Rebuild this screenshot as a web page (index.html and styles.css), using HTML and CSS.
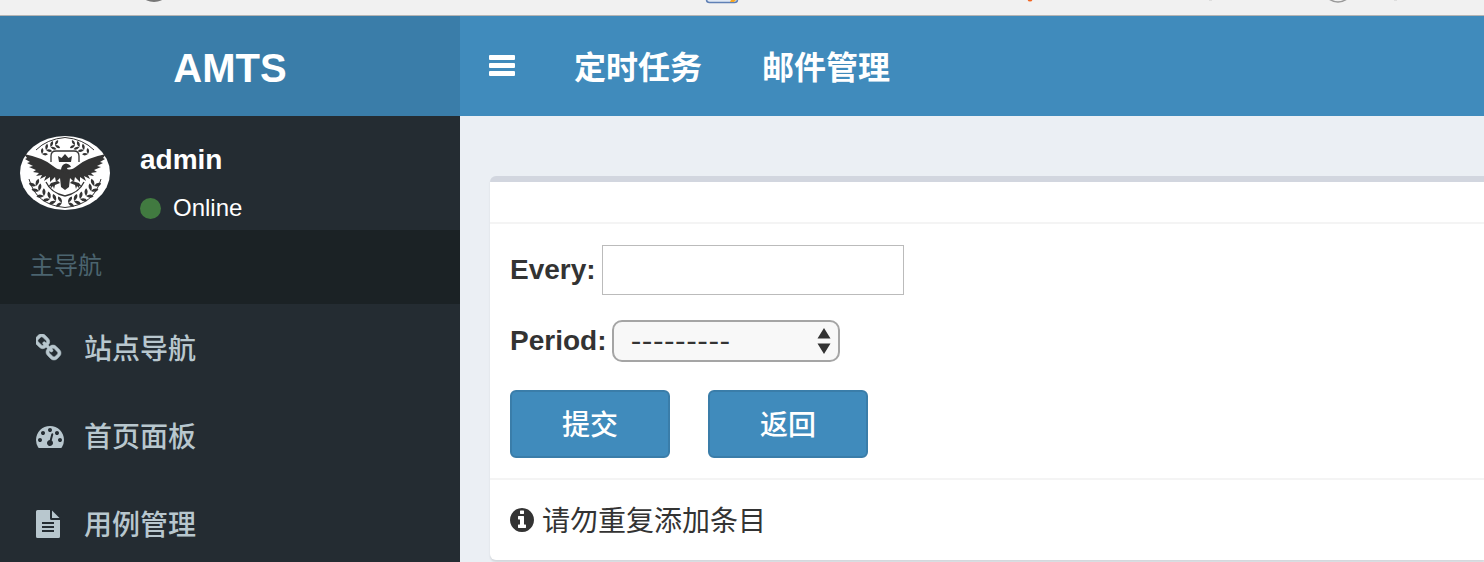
FILE: index.html
```html
<!DOCTYPE html>
<html lang="zh-CN">
<head>
<meta charset="utf-8">
<title>AMTS</title>
<link rel="stylesheet" href="styles.css">
</head>
<body>
<div class="toolbar" aria-hidden="true">
  <svg class="toolbar-icons" width="1484" height="15" viewBox="0 0 1484 15">
    <ellipse cx="154" cy="-3" rx="10" ry="5" fill="#777"/>
    <rect x="706.500" y="-12" width="31" height="14.500" rx="3" fill="#dfe8f5" stroke="#5f80b5" stroke-width="1.500"/>
    <path d="M731 0h5l-2 2h-4z" fill="#f5a623"/>
    <circle cx="1030" cy="-1" r="2.500" fill="#f26522"/>
    <path d="M1329 -1Q1338 5 1347 -1" fill="none" stroke="#999" stroke-width="1.500"/>
    <path d="M1209 0h3M1394 0h3" stroke="#ccc"/>
  </svg>
</div>
<header class="header">
  <a class="logo" href="#">AMTS</a>
  <nav class="navbar">
    <button class="toggle" type="button" aria-label="Toggle navigation">
      <svg width="26" height="22" viewBox="0 0 26 22" fill="currentColor"><rect y="0" width="26" height="5" rx="1"/><rect y="8" width="26" height="5" rx="1"/><rect y="16" width="26" height="5" rx="1"/></svg>
    </button>
    <a class="nav-link" href="#">定时任务</a>
    <a class="nav-link" href="#">邮件管理</a>
  </nav>
</header>
<div class="wrapper">
  <aside class="sidebar">
    <div class="user-panel">
      <svg class="avatar" viewBox="0 0 90 74" role="img" aria-label="admin">
        <defs>
          <g id="leaf-pair">
            <path d="M0 0Q-6-1-6-6Q-1-6 0 0ZM0 0Q1-6 6-6Q6-1 0 0Z"/>
          </g>
          <g id="half">
            <path d="M16 14Q27 3 45 1.500" fill="none" stroke="#333" stroke-width="1"/>
            <path d="M9 43Q16 69 45 71.500" fill="none" stroke="#333" stroke-width="1"/>
            <path d="M45 15H36Q31 15 31 20V26M26 46Q31 57 45 60" fill="none" stroke="#333" stroke-width="1.300"/>
            <g fill="#333">
              <use href="#leaf-pair" transform="translate(22 18) rotate(48) scale(.7)"/>
              <use href="#leaf-pair" transform="translate(26 14) rotate(56) scale(.75)"/>
              <use href="#leaf-pair" transform="translate(30.500 11) rotate(65) scale(.75)"/>
              <use href="#leaf-pair" transform="translate(35 9) rotate(76) scale(.7)"/>
              <use href="#leaf-pair" transform="translate(16 50) rotate(-25) scale(.9)"/>
              <use href="#leaf-pair" transform="translate(19 55) rotate(-34) scale(.9)"/>
              <use href="#leaf-pair" transform="translate(24 60) rotate(-46) scale(.9)"/>
              <use href="#leaf-pair" transform="translate(30 63) rotate(-58) scale(.9)"/>
              <use href="#leaf-pair" transform="translate(36 65) rotate(-68) scale(.9)"/>
              <use href="#leaf-pair" transform="translate(42 66.500) rotate(-78) scale(.85)"/>
              <path d="M45 32Q40 36 33 30Q24 22 4 18L7 22L5 23L10 26L7 27L13 30L9 31L16 34L13 36L19 37L16 40L22 39L20 43L26 40L24 45L30 41L30 46L35 41L36 46L40 42L41 51L45 54Z"/>
              <path d="M38 45l-7 2-3 4 3-1-1 3 3-3 1 3 1-4 5-2z"/>
            </g>
          </g>
        </defs>
        <ellipse cx="45" cy="37" rx="45" ry="37" fill="#fff"/>
        <use href="#half"/>
        <use href="#half" transform="translate(90 0) scale(-1 1)"/>
        <path d="M41 35Q41 28 46 27.500Q50 28 51 31L47 32L49 38Z" fill="#333"/>
        <path d="M38 20L41.500 22L45 18L48.500 22L52 20L51 26H39Z" fill="#333"/>
      </svg>
      <div class="user-info">
        <p class="user-name">admin</p>
        <a class="status" href="#"><span class="dot"></span>Online</a>
      </div>
    </div>
    <div class="menu-title">主导航</div>
    <nav class="menu">
      <a class="menu-item" href="#">
        <svg width="28" height="28" viewBox="96 32 1740 1740" fill="currentColor" stroke="currentColor" stroke-width="36"><path d="M1456 1216q0-40-28-68l-208-208q-28-28-68-28-42 0-72 32 3 3 19 18.500t21.500 21.500 15 19 13 25.500 3.500 27.500q0 40-28 68t-68 28q-15 0-27.500-3.500t-25.500-13-19-15-21.500-21.500-18.500-19q-33 31-33 73 0 40 28 68l206 207q27 27 68 27 40 0 68-26l147-146q28-28 28-67zm-703-705q0-40-28-68l-206-207q-28-28-68-28-39 0-68 27l-147 146q-28 28-28 67 0 40 28 68l208 208q27 27 68 27 42 0 72-31-3-3-19-18.500t-21.500-21.500-15-19-13-25.500-3.500-27.500q0-40 28-68t68-28q15 0 27.500 3.500t25.500 13 19 15 21.500 21.500 18.500 19q33-31 33-73zm895 705q0 120-85 203l-147 146q-83 83-203 83-121 0-204-85l-206-207q-83-83-83-203 0-123 88-209l-88-88q-86 88-208 88-120 0-204-84l-208-208q-84-84-84-204t85-203l147-146q83-83 203-83 121 0 204 85l206 207q83 83 83 203 0 123-88 209l88 88q86-88 208-88 120 0 204 84l208 208q84 84 84 204z"/></svg>
        <span>站点导航</span>
      </a>
      <a class="menu-item" href="#">
        <svg width="28" height="28" viewBox="0 0 1792 1792" fill="currentColor"><path d="M384 1152q0-53-37.500-90.500t-90.500-37.500-90.500 37.500-37.500 90.500 37.500 90.500 90.500 37.500 90.500-37.500 37.500-90.500zm192-448q0-53-37.500-90.500t-90.500-37.500-90.500 37.500-37.500 90.500 37.500 90.500 90.500 37.500 90.500-37.500 37.500-90.500zm428 481l101-382q6-26-7.500-48.500t-38.500-29.500-48 6.500-30 39.500l-101 382q-60 5-107 43.500t-63 98.500q-20 77 20 146t117 89 146-20 89-117q16-60-6-117t-72-91zm660-33q0-53-37.500-90.500t-90.500-37.500-90.500 37.500-37.500 90.500 37.500 90.500 90.500 37.500 90.500-37.500 37.500-90.500zm-640-640q0-53-37.500-90.500t-90.500-37.500-90.500 37.500-37.500 90.500 37.500 90.500 90.500 37.500 90.500-37.500 37.500-90.500zm448 192q0-53-37.500-90.500t-90.500-37.500-90.500 37.500-37.500 90.500 37.500 90.500 90.500 37.500 90.500-37.500 37.500-90.500zm320 448q0 261-141 483-19 29-54 29h-1402q-35 0-54-29-141-221-141-483 0-182 71-348t191-286 286-191 348-71 348 71 286 191 191 286 71 348z"/></svg>
        <span>首页面板</span>
      </a>
      <a class="menu-item" href="#">
        <svg width="28" height="28" viewBox="0 0 28 28" fill="currentColor"><path fill-rule="evenodd" d="M1.500 0H14V8.500Q14 10 15.500 10H24V26.500Q24 28 22.500 28H1.500Q0 28 0 26.500V1.500Q0 0 1.500 0ZM6 12V14H18V12ZM6 16V18H18V16ZM6 20V22H18V20Z"/><path d="M16 .500L23.500 8H16Z"/></svg>
        <span>用例管理</span>
      </a>
    </nav>
  </aside>
  <main class="content">
    <form class="box">
      <div class="box-header"></div>
      <div class="box-body">
        <div class="field field-every">
          <label for="every">Every:</label>
          <input id="every" class="text-input" type="text">
        </div>
        <div class="field">
          <label for="period">Period:</label>
          <span class="select-wrap">
            <select id="period" class="select"><option>---------</option></select>
            <svg class="select-arrows" width="14" height="26" viewBox="0 0 14 26" fill="#333"><path d="M7 0L13.500 10.500H.500ZM7 26L.500 15.500H13.500Z"/></svg>
          </span>
        </div>
        <div class="actions">
          <button class="btn" type="submit">提交</button>
          <button class="btn" type="button">返回</button>
        </div>
      </div>
      <div class="box-footer">
        <svg width="24" height="24" viewBox="128 128 1536 1536" fill="currentColor"><path d="M1152 1376v-160q0-14-9-23t-23-9h-96v-512q0-14-9-23t-23-9h-320q-14 0-23 9t-9 23v160q0 14 9 23t23 9h96v320h-96q-14 0-23 9t-9 23v160q0 14 9 23t23 9h448q14 0 23-9t9-23zm-128-896v-160q0-14-9-23t-23-9h-192q-14 0-23 9t-9 23v160q0 14 9 23t23 9h192q14 0 23-9t9-23zm640 416q0 209-103 385.500t-279.500 279.500-385.500 103-385.500-103-279.500-279.500-103-385.500 103-385.500 279.500-279.500 385.500-103 385.500 103 279.500 279.500 103 385.500z"/></svg>
        <span>请勿重复添加条目</span>
      </div>
    </form>
  </main>
</div>
</body>
</html>
```
FILE: styles.css
```css
* { box-sizing: border-box; }
body {
  margin: 0;
  height: 100vh;
  display: flex;
  flex-direction: column;
  overflow: hidden;
  font-family: "Liberation Sans", "Noto Sans CJK SC", sans-serif;
  font-size: 28px;
  line-height: 40px;
  color: #333;
  background: #ebeff4;
}
a { color: inherit; text-decoration: none; }
p { margin: 0; }
button, input, select { font: inherit; margin: 0; }
svg { display: block; flex: none; }

.toolbar {
  flex: none;
  height: 16px;
  overflow: hidden;
  background: #f1f1f1;
  border-bottom: 1px solid #b4b4b4;
}

.header { display: flex; flex: none; height: 100px; color: #fff; }
.logo {
  width: 460px;
  display: flex;
  align-items: center;
  justify-content: center;
  background: #3a7da9;
  font-size: 40px;
  font-weight: bold;
  padding-top: 4px;
}
.navbar {
  flex: 1;
  display: flex;
  align-items: center;
  background: #408bbc;
}
.toggle {
  border: 0;
  background: none;
  color: inherit;
  padding: 30px 29px;
}
.nav-link { padding: 4px 30px 0; font-size: 32px; font-weight: bold; }

.wrapper { flex: 1; min-height: 0; display: flex; }
.sidebar {
  flex: none;
  width: 460px;
  overflow: hidden;
  background: #242c32;
  color: #b8c7ce;
}
.user-panel {
  display: flex;
  gap: 30px;
  height: 114px;
  padding: 20px;
  color: #fff;
}
.avatar { width: 90px; height: 74px; }
.user-info { padding-top: 4px; }
.user-name { font-weight: bold; }
.status {
  display: flex;
  align-items: center;
  gap: 12px;
  margin-top: 8px;
  font-size: 24px;
}
.dot { width: 21px; height: 21px; border-radius: 50%; background: #417a40; }
.menu-title {
  height: 74px;
  padding: 16px 30px;
  background: #1b2225;
  color: #4b646f;
  font-size: 24px;
}
.menu-item {
  display: flex;
  align-items: center;
  gap: 20px;
  height: 88px;
  padding-left: 36px;
  font-weight: 500;
}
.menu-item span, .box-footer span { padding-top: 4px; }

.content { flex: 1; padding: 60px 0 0 30px; }
.box {
  background: #fff;
  border-top: 6px solid #d2d6df;
  border-radius: 6px 0 0 6px;
  box-shadow: 0 2px 2px rgba(0, 0, 0, 0.1);
}
.box-header { height: 42px; border-bottom: 2px solid #f4f4f4; }
.box-body { padding: 20px; }
.field { display: flex; align-items: center; gap: 6px; height: 42px; }
.field-every { height: 52px; margin-bottom: 24px; }
.field label { font-weight: bold; }
.text-input {
  width: 302px;
  height: 50px;
  padding: 2px 8px;
  border: 1px solid #bbb;
  background: #fff;
}
.select-wrap { position: relative; display: flex; }
.select {
  appearance: none;
  width: 228px;
  height: 42px;
  padding: 0 16px;
  border: 2px solid #a5a5a5;
  border-radius: 10px;
  background: #f8f8f8;
  color: #333;
  font-family: Inter, sans-serif;
  font-size: 24px;
  font-weight: 500;
}
.select-arrows {
  position: absolute;
  top: 8px;
  right: 9px;
  pointer-events: none;
}
.actions { display: flex; gap: 38px; margin-top: 28px; }
.btn {
  width: 160px;
  height: 68px;
  padding: 4px 0 0;
  border: 2px solid #3a7da9;
  border-radius: 6px;
  background: #408bbc;
  color: #fff;
  font-weight: 500;
}
.box-footer {
  display: flex;
  align-items: center;
  gap: 8px;
  height: 82px;
  padding: 0 20px;
  border-top: 2px solid #f4f4f4;
}
```
